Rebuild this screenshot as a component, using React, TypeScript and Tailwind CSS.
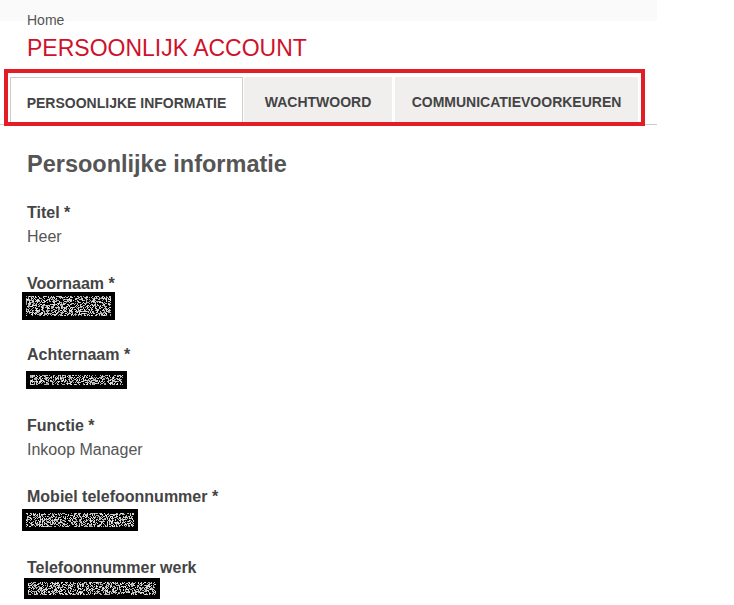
import React from "react";

type Blob = { left: number; top: number; w: number; h: number; seed: number };

// redacted value: black box with a noisy grey pattern inside
function Redacted({ left, top, w, h, seed }: Blob) {
  let s = seed;
  const rnd = () => {
    s = (s * 1103515245 + 12345) % 2147483648;
    return s / 2147483648;
  };
  const cells: React.ReactNode[] = [];
  const pad = 4;
  for (let y = pad; y < h - pad; y += 1) {
    for (let x = pad; x < w - pad; x += 1) {
      const v = rnd();
      if (v > 0.5) {
        const g = Math.floor(70 + v * 170);
        cells.push(
          <rect
            key={`${x}-${y}`}
            x={x}
            y={y}
            width={1}
            height={1}
            fill={`rgb(${g},${g},${g})`}
          />
        );
      }
    }
  }
  return (
    <svg
      className="absolute"
      style={{ left, top }}
      width={w}
      height={h}
      viewBox={`0 0 ${w} ${h}`}
    >
      <rect width={w} height={h} fill="#000" />
      {cells}
    </svg>
  );
}

type Field = { label: string; value?: string; blob?: Blob };

const fields: Field[] = [
  { label: "Titel *", value: "Heer" },
  { label: "Voornaam *", blob: { left: -5, top: -4, w: 93, h: 28, seed: 7 } },
  { label: "Achternaam *", blob: { left: -1, top: 4, w: 101, h: 18, seed: 19 } },
  { label: "Functie *", value: "Inkoop Manager" },
  {
    label: "Mobiel telefoonnummer *",
    blob: { left: -5, top: 0, w: 116, h: 22, seed: 31 },
  },
  {
    label: "Telefoonnummer werk",
    blob: { left: -3, top: -2, w: 136, h: 21, seed: 53 },
  },
];

export default function App() {
  return (
    <div className="relative w-[734px] min-h-[605px] bg-white font-['Liberation_Sans',Arial,sans-serif] overflow-hidden">
      <div className="w-[657px]">
        {/* Breadcrumb */}
        <div className="h-[21px] bg-[#fafafa] pt-[10px] px-[27px]">
          <div className="text-[14px] leading-5 text-[#555]">Home</div>
        </div>

        <h1 className="mt-[13px] px-[27px] text-[23px] leading-[28px] text-[#d0112b]">
          PERSOONLIJK ACCOUNT
        </h1>

        {/* Tabs */}
        <div className="mt-[15px] flex pl-[10px] border-b border-[#cccccc]">
          <div className="w-[233px] h-[47px] pt-[4px] flex items-center justify-center bg-white border border-b-0 border-[#cccccc] text-[14px] font-bold text-[#444]">
            PERSOONLIJKE INFORMATIE
          </div>
          <div className="ml-[1px] w-[148px] h-[47px] pt-[4px] flex items-center justify-center bg-[#f0efee] text-[14px] font-bold text-[#444]">
            WACHTWOORD
          </div>
          <div className="ml-[3px] w-[243px] h-[47px] pt-[4px] flex items-center justify-center bg-[#f0efee] text-[14px] font-bold text-[#444]">
            COMMUNICATIEVOORKEUREN
          </div>
        </div>

        {/* Content */}
        <div className="px-[27px]">
          <h2 className="mt-[25px] text-[23.5px] leading-[28px] font-bold text-[#555]">
            Persoonlijke informatie
          </h2>
          <div className="mt-[23px] flex flex-col">
            {fields.map((f) => (
              <div key={f.label} className="mb-[23px]">
                <div className="text-[16px] leading-6 font-bold text-[#444]">
                  {f.label}
                </div>
                <div className="relative h-6 text-[16px] leading-6 text-[#555]">
                  {f.value}
                  {f.blob && <Redacted {...f.blob} />}
                </div>
              </div>
            ))}
          </div>
        </div>
      </div>

      {/* annotation frame around the tabs */}
      <div className="absolute left-[4px] top-[69px] w-[641px] h-[57px] border-4 border-[#e31d25]" />
    </div>
  );
}
